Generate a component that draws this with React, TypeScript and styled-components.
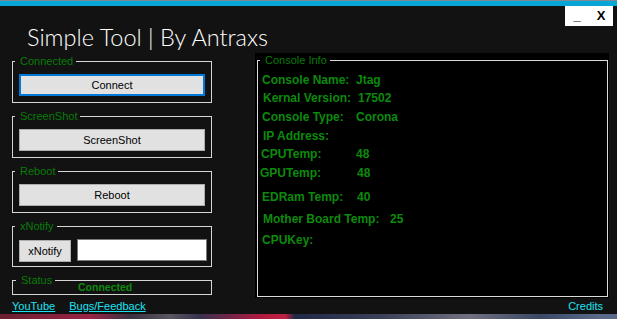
import React from 'react';
import styled, {createGlobalStyle} from 'styled-components';

const GlobalStyle = createGlobalStyle`
  html, body {
    margin: 0;
    padding: 0;
    background: #121212;
  }
  body {
    font-family: "Liberation Sans", Arial, sans-serif;
  }
`;

const Window = styled.div`
  width: 617px;
  height: 319px;
  overflow: hidden;
  display: flex;
  flex-direction: column;
  background: #121212;
`;

const AccentBar = styled.div`
  flex: none;
  height: 6px;
  background: linear-gradient(to bottom, #7d8a96 0, #7d8a96 1px, #06a7d6 1px);
`;

const Header = styled.div`
  flex: none;
  height: 47px;
  display: flex;
  justify-content: space-between;
  align-items: flex-start;
  padding: 0 4px 0 27px;
`;

const Title = styled.h1`
  margin: 17px 0 0;
  font: 300 23.5px/28px Lato, "Open Sans", sans-serif;
  color: #fff;
`;

const WindowControls = styled.div`
  display: flex;
  background: #fff;
`;

const ControlButton = styled.button`
  width: 24px;
  height: 20px;
  padding: 0;
  border: 0;
  background: transparent;
  font: bold 13px/20px "Liberation Sans", Arial, sans-serif;
  color: #000;
`;

const Body = styled.div`
  flex: none;
  height: 245px;
  display: flex;
  gap: 43px;
  padding-left: 12px;
`;

const LeftColumn = styled.div`
  width: 200px;
  padding-top: 2px;
  display: flex;
  flex-direction: column;
  gap: 7px;
`;

const GroupBox = styled.fieldset`
  margin: 0;
  min-width: 0;
  padding: 6px;
  border: 1px solid #d6d6d6;
`;

const NotifyGroup = styled(GroupBox)`
  padding-bottom: 4px;
`;

const StatusGroup = styled(GroupBox)`
  padding: 0;
  height: 21px;
  box-sizing: border-box;
`;

const GroupLegend = styled.legend<{$inset?: number}>`
  margin-left: ${p => p.$inset ?? -4}px;
  padding: 0 3px 0 5px;
  font: 11px/13px "Liberation Sans", Arial, sans-serif;
  color: #087c08;
`;

const ActionButton = styled.button<{$default?: boolean}>`
  display: block;
  width: 100%;
  height: 22px;
  padding: 0;
  background: #e1e1e1;
  border: ${p => (p.$default ? '2px solid #0078d7' : '1px solid #adadad')};
  font: 11px "Liberation Sans", Arial, sans-serif;
  color: #000;
`;

const NotifyRow = styled.div`
  display: flex;
  align-items: flex-start;
  gap: 6px;
`;

const NotifyButton = styled(ActionButton)`
  width: 52px;
  margin-top: 1px;
  flex: none;
`;

const NotifyInput = styled.input`
  width: 130px;
  height: 22px;
  box-sizing: border-box;
  border: 1px solid #7a7a7a;
  background: #fff;
  padding: 0 3px;
  font: 11px "Liberation Sans", Arial, sans-serif;
`;

const StatusText = styled.div`
  height: 7px;
  margin-top: -3px;
  padding-left: 65px;
  font: bold 10.5px/7px "Liberation Sans", Arial, sans-serif;
  color: #0c8a0c;
`;

const ConsolePanel = styled.div`
  width: 354px;
  box-sizing: border-box;
  padding: 1px 1px 1px 2px;
  background: #000;
  display: flex;
  flex-direction: column;
`;

const ConsoleBox = styled(GroupBox)`
  flex: 1;
  padding: 4px 0 0;
  border-color: #dcdcdc;
`;

const InfoRow = styled.div<{$dx: number; $dy: number}>`
  display: flex;
  height: 19px;
  margin: ${p => p.$dy}px 0 0 ${p => p.$dx}px;
  font: bold 12px/19px "Liberation Sans", Arial, sans-serif;
  color: #0c8a0c;
  white-space: nowrap;
`;

const InfoLabel = styled.span<{$width: number}>`
  width: ${p => p.$width}px;
  flex: none;
`;

const Footer = styled.div`
  flex: none;
  height: 16px;
  display: flex;
  align-items: center;
  gap: 14px;
  padding: 0 14px 0 12px;
`;

const FooterLink = styled.a<{$push?: boolean}>`
  margin-left: ${p => (p.$push ? 'auto' : '0')};
  font: 11px/16px "Liberation Sans", Arial, sans-serif;
  color: #1fe3f3;
  text-decoration: ${p => (p.$push ? 'none' : 'underline')};
`;

const DesktopStrip = styled.div`
  flex: none;
  height: 5px;
  background: linear-gradient(to right, #6a1e30 0, #9a2445 90px, #3a3040 130px, #5a5560 170px,
    #383050 200px, #b01a40 260px, #c02040 285px, #202848 295px, #3a4058 380px, #707080 470px,
    #3a4866 540px, #5a6a8a 600px);
`;

const consoleInfo = [
  {label: 'Console Name:', value: 'Jtag', dx: 4, width: 94, dy: 0},
  {label: 'Kernal Version:', value: '17502', dx: 5, width: 95, dy: -1},
  {label: 'Console Type:', value: 'Corona', dx: 4, width: 94, dy: 0},
  {label: 'IP Address:', value: '', dx: 5, width: 94, dy: 0},
  {label: 'CPUTemp:', value: '48', dx: 3, width: 95, dy: -1},
  {label: 'GPUTemp:', value: '48', dx: 2, width: 97, dy: 0},
  {label: 'EDRam Temp:', value: '40', dx: 4, width: 95, dy: 5},
  {label: 'Mother Board Temp:', value: '25', dx: 5, width: 127, dy: 3},
  {label: 'CPUKey:', value: '', dx: 4, width: 94, dy: 2},
];

function App() {
  return (
    <Window>
      <GlobalStyle/>
      <AccentBar/>
      <Header>
        <Title>Simple Tool | By Antraxs</Title>
        <WindowControls>
          <ControlButton>_</ControlButton>
          <ControlButton>X</ControlButton>
        </WindowControls>
      </Header>
      <Body>
        <LeftColumn>
          <GroupBox>
            <GroupLegend>Connected</GroupLegend>
            <ActionButton $default>Connect</ActionButton>
          </GroupBox>
          <GroupBox>
            <GroupLegend>ScreenShot</GroupLegend>
            <ActionButton>ScreenShot</ActionButton>
          </GroupBox>
          <GroupBox>
            <GroupLegend>Reboot</GroupLegend>
            <ActionButton>Reboot</ActionButton>
          </GroupBox>
          <NotifyGroup>
            <GroupLegend>xNotify</GroupLegend>
            <NotifyRow>
              <NotifyButton>xNotify</NotifyButton>
              <NotifyInput/>
            </NotifyRow>
          </NotifyGroup>
          <StatusGroup>
            <GroupLegend $inset={3}>Status</GroupLegend>
            <StatusText>Connected</StatusText>
          </StatusGroup>
        </LeftColumn>
        <ConsolePanel>
          <ConsoleBox>
            <GroupLegend $inset={2}>Console Info</GroupLegend>
            {consoleInfo.map(row => (
              <InfoRow key={row.label} $dx={row.dx} $dy={row.dy}>
                <InfoLabel $width={row.width}>{row.label}</InfoLabel>
                {row.value}
              </InfoRow>
            ))}
          </ConsoleBox>
        </ConsolePanel>
      </Body>
      <Footer>
        <FooterLink>YouTube</FooterLink>
        <FooterLink>Bugs/Feedback</FooterLink>
        <FooterLink $push>Credits</FooterLink>
      </Footer>
      <DesktopStrip/>
    </Window>
  );
}

export default App;
